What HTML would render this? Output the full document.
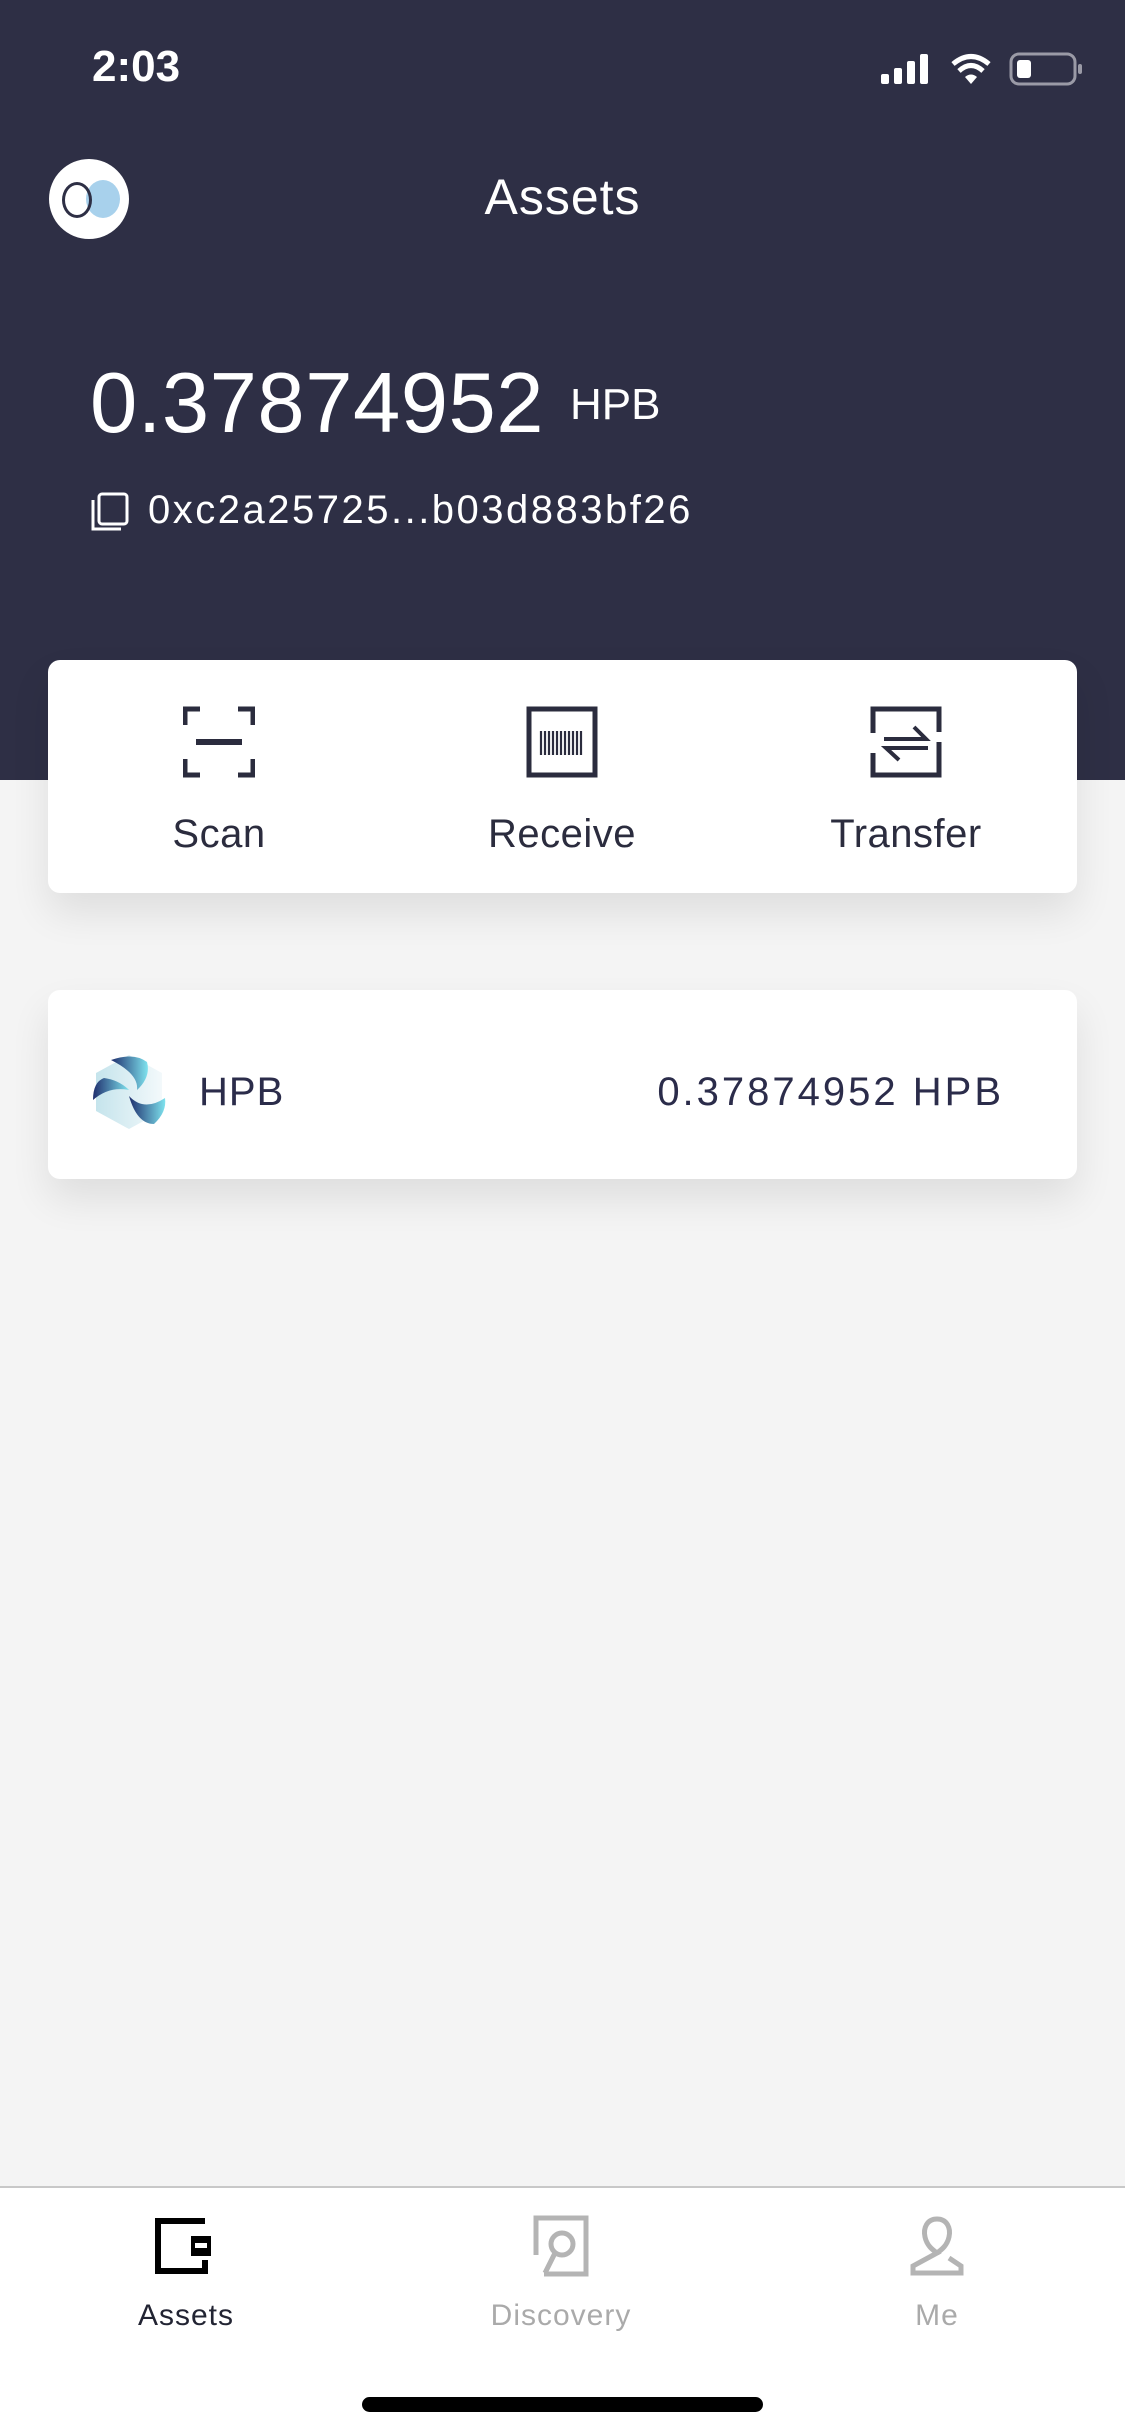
<!DOCTYPE html>
<html><head><meta charset="utf-8"><style>
*{margin:0;padding:0;box-sizing:border-box}
body{width:1125px;height:2436px;background:#f4f4f4;font-family:"Liberation Sans",sans-serif;position:relative;overflow:hidden}
.hdr{position:absolute;left:0;top:0;width:1125px;height:780px;background:#2e2f45}
.abs{position:absolute}
.w{color:#fff}
.card{position:absolute;left:48px;width:1029px;background:#fff;border-radius:12px;box-shadow:0 20px 40px rgba(0,0,0,0.09)}
.lbl{position:absolute;font-size:40px;color:#2b2c3e;transform:translateX(-50%);top:812px;white-space:nowrap;letter-spacing:0.5px}
.tab{position:absolute;font-size:30px;transform:translateX(-50%);top:2299px;letter-spacing:1px}
</style></head><body>
<div class="hdr"></div>
<div class="abs w" style="left:92px;top:42px;font-size:44px;font-weight:bold">2:03</div>
<svg class="abs" style="left:880px;top:52px" width="205" height="34" viewBox="0 0 205 34">
<rect x="1" y="22" width="8" height="10" rx="2" fill="#fff"/><rect x="14" y="16" width="8" height="16" rx="2" fill="#fff"/><rect x="27" y="9" width="8" height="23" rx="2" fill="#fff"/><rect x="40" y="2" width="8" height="30" rx="2" fill="#fff"/>
<path d="M73 12 Q91 -3 109 12" stroke="#fff" stroke-width="5" fill="none"/><path d="M79 19 Q91 8 103 19" stroke="#fff" stroke-width="5" fill="none"/><path d="M85 25 L91 32 L97 25 Q91 20 85 25Z" fill="#fff"/>
<rect x="131" y="2" width="64" height="30" rx="8" stroke="#9a9aa6" stroke-width="3" fill="none"/><rect x="137" y="8" width="14" height="18" rx="3" fill="#fff"/><rect x="198" y="12" width="4" height="10" rx="2" fill="#9a9aa6"/>
</svg>
<div class="abs" style="left:49px;top:159px;width:80px;height:80px;border-radius:50%;background:#fff"></div>
<div class="abs" style="left:86px;top:180px;width:34px;height:38px;border-radius:50%;background:#a8d1ec"></div>
<div class="abs" style="left:62px;top:182px;width:30px;height:36px;border-radius:50%;border:3px solid #2e2f45"></div>
<div class="abs w" style="left:0;width:1125px;text-align:center;top:168px;font-size:50px;letter-spacing:1px">Assets</div>
<div class="abs w" style="left:90px;top:355px;font-size:85px;letter-spacing:0.5px">0.37874952</div>
<div class="abs w" style="left:570px;top:380px;font-size:44px">HPB</div>
<svg class="abs" style="left:90px;top:492px" width="40" height="40" viewBox="0 0 40 40"><rect x="9" y="2" width="28" height="30" rx="3" stroke="#fff" stroke-width="3" fill="none"/><path d="M3 8 V37 H31" stroke="#fff" stroke-width="3" fill="none"/></svg>
<div class="abs w" style="left:148px;top:488px;font-size:40px;letter-spacing:2.5px">0xc2a25725...b03d883bf26</div>

<div class="card" style="top:660px;height:233px"></div>
<svg class="abs" style="left:183px;top:706px" width="72" height="72" viewBox="0 0 72 72" fill="none" stroke="#2b2c3e" stroke-width="5">
<path d="M2 19V3H17M55 3H70V19M2 53V69H17M55 69H70V53"/><path d="M13 36H59" stroke-width="6"/></svg>
<svg class="abs" style="left:526px;top:706px" width="72" height="72" viewBox="0 0 72 72" fill="none" stroke="#2b2c3e">
<rect x="3" y="3" width="66" height="66" stroke-width="5"/><path d="M15 25V49M19 25V49M23 25V49M27 25V49M31 25V49M35 25V49M39 25V49M43 25V49M47 25V49M51 25V49M55 25V49" stroke-width="2.2"/></svg>
<svg class="abs" style="left:870px;top:706px" width="72" height="72" viewBox="0 0 72 72" fill="none" stroke="#2b2c3e" stroke-width="5">
<path d="M3 27V3H69V26M69 36V69H3V47"/><path d="M14 33H56L44 21M58 42H16L29 54" stroke-width="4"/></svg>
<div class="lbl" style="left:219px">Scan</div>
<div class="lbl" style="left:562px">Receive</div>
<div class="lbl" style="left:906px">Transfer</div>

<div class="card" style="top:990px;height:189px"></div>
<svg class="abs" style="left:89px;top:1052px" width="80" height="80" viewBox="0 0 80 80">
<defs><linearGradient id="g" x1="0" y1="0" x2="1" y2="0"><stop offset="0" stop-color="#1f2f6e"/><stop offset="1" stop-color="#7fe3ee"/></linearGradient>
<linearGradient id="h" x1="0" y1="0" x2="1" y2="0"><stop offset="0" stop-color="#c5e4ec"/><stop offset="1" stop-color="#f3f9fb"/></linearGradient></defs>
<path d="M40 3 L73 21 V59 L40 77 L7 59 V21Z" fill="url(#h)"/>
<path d="M22 8 Q45 0 58 10 Q62 25 48 38 Q50 22 22 8Z" fill="url(#g)"/>
<path d="M4 48 Q4 30 15 26 Q30 28 40 38 Q20 34 4 48Z" fill="url(#g)"/>
<path d="M40 44 Q55 60 76 46 Q78 60 65 72 Q48 72 40 44Z" fill="url(#g)"/>
</svg>
<div class="abs" style="left:199px;top:1070px;font-size:40px;color:#2b2c4a;letter-spacing:1px">HPB</div>
<div class="abs" style="right:121px;top:1070px;font-size:40px;color:#2b2c4a;letter-spacing:3px">0.37874952 HPB</div>

<div class="abs" style="left:0;top:2186px;width:1125px;height:250px;background:#fff;border-top:2px solid #c8c8c8"></div>
<svg class="abs" style="left:155px;top:2218px" width="60" height="56" viewBox="0 0 60 56">
<path d="M50 3H3V53H50V42" stroke="#000" stroke-width="6" fill="none"/><rect x="36" y="18" width="20" height="20" fill="#000"/><rect x="40" y="25" width="12" height="5" fill="#fff"/></svg>
<svg class="abs" style="left:532px;top:2215px" width="60" height="62" viewBox="0 0 60 62" fill="none" stroke="#b4b4b4" stroke-width="5">
<path d="M4 40V3H54V59H12"/><circle cx="30" cy="29" r="11"/><path d="M23 38L13 58"/></svg>
<svg class="abs" style="left:909px;top:2216px" width="56" height="60" viewBox="0 0 56 60" fill="none" stroke="#b4b4b4" stroke-width="5">
<path d="M28 3C18 3 14 12 16 21C18 30 24 34 28 37L4 50V57H52V50L40 42"/><path d="M28 3C38 3 42 12 40 21C38 30 32 34 28 37"/></svg>
<div class="tab" style="left:186px;color:#222433">Assets</div>
<div class="tab" style="left:561px;color:#aaa">Discovery</div>
<div class="tab" style="left:937px;color:#aaa">Me</div>
<div class="abs" style="left:362px;top:2397px;width:401px;height:15px;border-radius:8px;background:#000"></div>
</body></html>
